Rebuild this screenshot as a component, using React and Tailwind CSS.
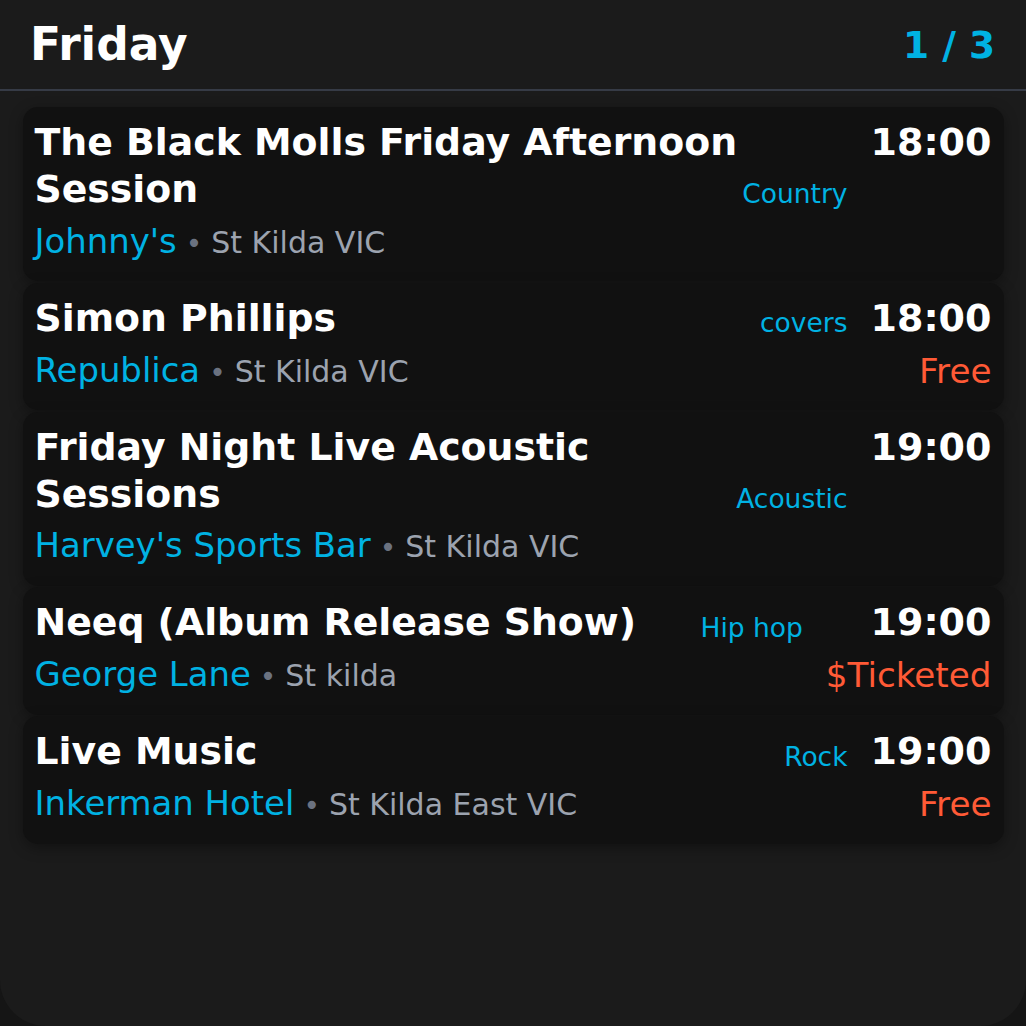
import React from "react";

const events = [
  {
    title: "The Black Molls Friday Afternoon Session",
    genre: "Country",
    time: "18:00",
    venue: "Johnny's",
    location: "St Kilda VIC",
    price: null,
  },
  {
    title: "Simon Phillips",
    genre: "covers",
    time: "18:00",
    venue: "Republica",
    location: "St Kilda VIC",
    price: "Free",
  },
  {
    title: "Friday Night Live Acoustic Sessions",
    genre: "Acoustic",
    time: "19:00",
    venue: "Harvey's Sports Bar",
    location: "St Kilda VIC",
    price: null,
  },
  {
    title: "Neeq (Album Release Show)",
    genre: "Hip hop",
    time: "19:00",
    venue: "George Lane",
    location: "St kilda",
    price: "$Ticketed",
  },
  {
    title: "Live Music",
    genre: "Rock",
    time: "19:00",
    venue: "Inkerman Hotel",
    location: "St Kilda East VIC",
    price: "Free",
  },
];

function Card({ e }) {
  return (
    <div className="flex items-start gap-[23px] rounded-[15px] bg-[#111111] pl-[12px] pr-[12px] pt-[12px] pb-[13px] shadow-[0_4px_14px_rgba(0,0,0,0.35)]">
      <div className="flex min-w-0 flex-1 flex-col">
        <div className="flex items-end gap-[4px]">
          <div className="min-w-0 flex-1 text-[37.8px] font-bold leading-[46.875px] text-white">
            {e.title}
          </div>
          <div className="shrink-0 text-[26.5px] leading-[37.5px] text-[#00b2e3]">
            {e.genre}
          </div>
        </div>
        <div className="mt-[3px] flex h-[52.5px] items-baseline whitespace-nowrap leading-[52.5px]">
          <span className="text-[33.9px] text-[#00b2e3]">{e.venue}</span>
          <span className="ml-[9px] mr-[9px] text-[28px] leading-none text-[#6b7280]">•</span>
          <span className="text-[30px] text-[#9ca3af]">{e.location}</span>
        </div>
      </div>
      <div className="flex shrink-0 flex-col items-end">
        <div className="text-[38px] font-bold leading-[46.875px] text-white">
          {e.time}
        </div>
        {e.price && (
          <div className="mt-[3px] text-[34.2px] leading-[52.5px] text-[#ff5a36]">
            {e.price}
          </div>
        )}
      </div>
    </div>
  );
}

export default function App() {
  return (
    <div
      className="h-[1026px] w-full bg-[#151515]"
      style={{ fontFamily: "'DejaVu Sans', 'Liberation Sans', sans-serif" }}
    >
      <div className="h-full w-full overflow-hidden rounded-b-[46px] bg-[#1b1b1b]">
        <div className="flex items-center justify-between border-b-2 border-[#363b46] pl-[30px] pr-[31px] pt-[15px] pb-[14px]">
          <div className="text-[45.5px] font-bold leading-[60px] text-white">Friday</div>
          <div className="text-[37.5px] font-bold leading-[52.5px] text-[#00b2e3]">1 / 3</div>
        </div>
        <div className="flex flex-col gap-[1.5px] px-[22.5px] pt-[16px]">
          {events.map((e, i) => (
            <Card key={i} e={e} />
          ))}
        </div>
      </div>
    </div>
  );
}
